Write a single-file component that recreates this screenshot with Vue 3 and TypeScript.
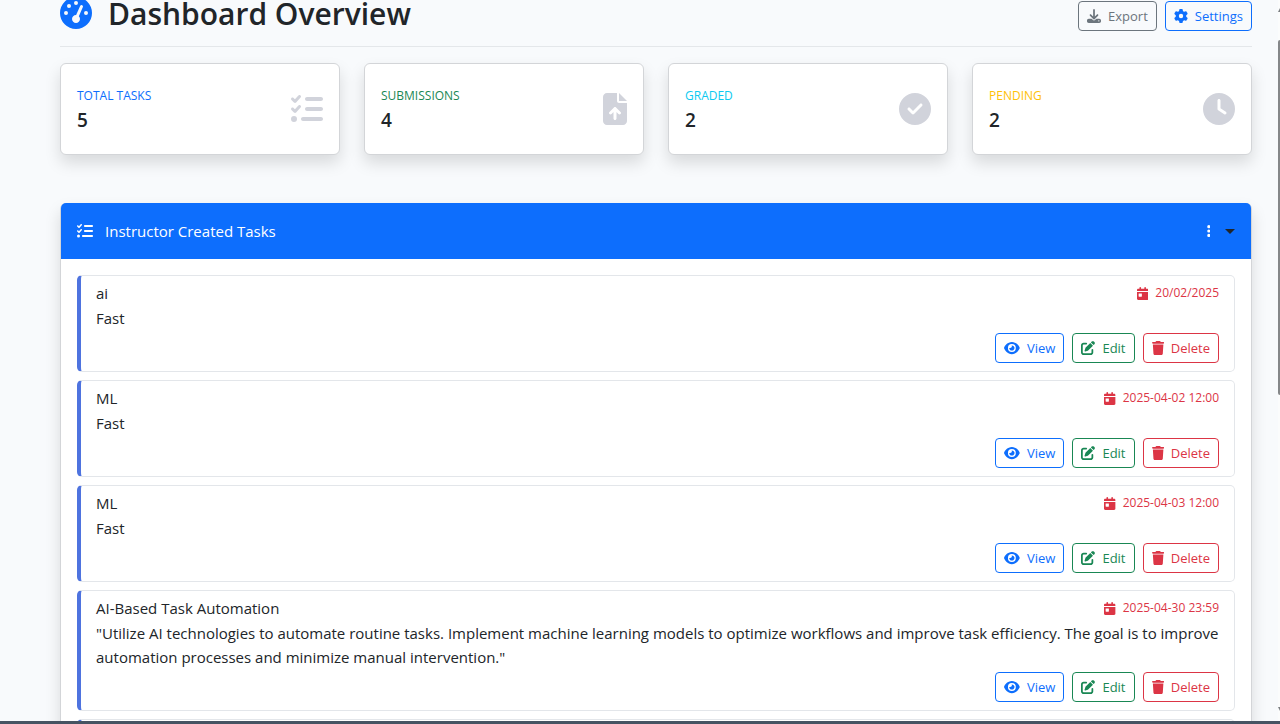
<script setup lang="ts">
interface Icon {
  width: number
  path: string
}

interface Stat {
  label: string
  value: number
  tone: string
  icon: string
}

interface Task {
  title: string
  description: string
  due: string
}

const icons: Record<string, Icon> = {
  gauge: {
    width: 512,
    path: 'M0 256a256 256 0 1 1 512 0A256 256 0 1 1 0 256zM288 96a32 32 0 1 0 -64 0 32 32 0 1 0 64 0zM256 416c35.3 0 64-28.7 64-64c0-17.4-6.9-33.1-18.1-44.6L366 161.7c5.3-12.1-.2-26.3-12.3-31.6s-26.3 .2-31.6 12.3L257.9 288c-.6 0-1.3 0-1.9 0c-35.3 0-64 28.7-64 64s28.7 64 64 64zM176 144a32 32 0 1 0 -64 0 32 32 0 1 0 64 0zM96 288a32 32 0 1 0 0-64 32 32 0 1 0 0 64zm352-32a32 32 0 1 0 -64 0 32 32 0 1 0 64 0z',
  },
  list: {
    width: 512,
    path: 'M152.1 38.2c9.9 8.9 10.7 24 1.8 33.9l-72 80c-4.4 4.9-10.6 7.8-17.2 7.9s-12.9-2.4-17.6-7L7 113C-2.3 103.6-2.3 88.4 7 79s24.6-9.4 33.9 0l22.1 22.1 55.1-61.2c8.9-9.9 24-10.7 33.9-1.8zm0 160c9.9 8.9 10.7 24 1.8 33.9l-72 80c-4.4 4.9-10.6 7.8-17.2 7.9s-12.9-2.4-17.6-7L7 273c-9.4-9.4-9.4-24.6 0-33.9s24.6-9.4 33.9 0l22.1 22.1 55.1-61.2c8.9-9.9 24-10.7 33.9-1.8zM224 96c0-17.7 14.3-32 32-32l224 0c17.7 0 32 14.3 32 32s-14.3 32-32 32l-224 0c-17.7 0-32-14.3-32-32zm0 160c0-17.7 14.3-32 32-32l224 0c17.7 0 32 14.3 32 32s-14.3 32-32 32l-224 0c-17.7 0-32-14.3-32-32zM160 416c0-17.7 14.3-32 32-32l288 0c17.7 0 32 14.3 32 32s-14.3 32-32 32l-288 0c-17.7 0-32-14.3-32-32zM48 368a48 48 0 1 1 0 96 48 48 0 1 1 0-96z',
  },
  file: {
    width: 384,
    path: 'M64 0C28.7 0 0 28.7 0 64L0 448c0 35.3 28.7 64 64 64l256 0c35.3 0 64-28.7 64-64l0-288-128 0c-17.7 0-32-14.3-32-32L224 0 64 0zM256 0l0 128 128 0L256 0zM216 408c0 13.3-10.7 24-24 24s-24-10.7-24-24l0-102.1-31 31c-9.4 9.4-24.6 9.4-33.9 0s-9.4-24.6 0-33.9l72-72c9.4-9.4 24.6-9.4 33.9 0l72 72c9.4 9.4 9.4 24.6 0 33.9s-24.6 9.4-33.9 0l-31-31L216 408z',
  },
  check: {
    width: 512,
    path: 'M256 512A256 256 0 1 0 256 0a256 256 0 1 0 0 512zM369 209L241 337c-9.4 9.4-24.6 9.4-33.9 0l-64-64c-9.4-9.4-9.4-24.6 0-33.9s24.6-9.4 33.9 0l47 47L335 175c9.4-9.4 24.6-9.4 33.9 0s9.4 24.6 0 33.9z',
  },
  clock: {
    width: 512,
    path: 'M256 0a256 256 0 1 1 0 512A256 256 0 1 1 256 0zM232 120l0 136c0 8 4 15.5 10.7 20l96 64c11 7.4 25.9 4.4 33.3-6.7s4.4-25.9-6.7-33.3L280 243.2 280 120c0-13.3-10.7-24-24-24s-24 10.7-24 24z',
  },
  download: {
    width: 512,
    path: 'M288 32c0-17.7-14.3-32-32-32s-32 14.3-32 32l0 242.7-73.4-73.4c-12.5-12.5-32.8-12.5-45.3 0s-12.5 32.8 0 45.3l128 128c12.5 12.5 32.8 12.5 45.3 0l128-128c12.5-12.5 12.5-32.8 0-45.3s-32.8-12.5-45.3 0L288 274.7 288 32zM64 352c-35.3 0-64 28.7-64 64l0 32c0 35.3 28.7 64 64 64l384 0c35.3 0 64-28.7 64-64l0-32c0-35.3-28.7-64-64-64l-101.5 0-45.3 45.3c-25 25-65.5 25-90.5 0L165.5 352 64 352zm368 56a24 24 0 1 1 0 48 24 24 0 1 1 0-48z',
  },
  gear: {
    width: 512,
    path: 'M495.9 166.6c3.2 8.7 .5 18.4-6.4 24.6l-43.3 39.4c1.1 8.3 1.7 16.8 1.7 25.4s-.6 17.1-1.7 25.4l43.3 39.4c6.9 6.2 9.6 15.9 6.4 24.6c-4.4 11.9-9.7 23.3-15.8 34.3l-4.7 8.1c-6.6 11-14 21.4-22.1 31.2c-5.9 7.2-15.7 9.6-24.5 6.8l-55.7-17.7c-13.4 10.3-28.2 18.9-44 25.4l-12.5 57.1c-2 9.1-9 16.3-18.2 17.8c-13.8 2.3-28 3.5-42.5 3.5s-28.7-1.2-42.5-3.5c-9.2-1.5-16.2-8.7-18.2-17.8l-12.5-57.1c-15.8-6.5-30.6-15.1-44-25.4L83.1 425.9c-8.8 2.8-18.6 .3-24.5-6.8c-8.1-9.8-15.5-20.2-22.1-31.2l-4.7-8.1c-6.1-11-11.4-22.4-15.8-34.3c-3.2-8.7-.5-18.4 6.4-24.6l43.3-39.4C64.6 273.1 64 264.6 64 256s.6-17.1 1.7-25.4L22.4 191.2c-6.9-6.2-9.6-15.9-6.4-24.6c4.4-11.9 9.7-23.3 15.8-34.3l4.7-8.1c6.6-11 14-21.4 22.1-31.2c5.9-7.2 15.7-9.6 24.5-6.8l55.7 17.7c13.4-10.3 28.2-18.9 44-25.4l12.5-57.1c2-9.1 9-16.3 18.2-17.8C227.3 1.2 241.5 0 256 0s28.7 1.2 42.5 3.5c9.2 1.5 16.2 8.7 18.2 17.8l12.5 57.1c15.8 6.5 30.6 15.1 44 25.4l55.7-17.7c8.8-2.8 18.6-.3 24.5 6.8c8.1 9.8 15.5 20.2 22.1 31.2l4.7 8.1c6.1 11 11.4 22.4 15.8 34.3zM256 336a80 80 0 1 0 0-160 80 80 0 1 0 0 160z',
  },
  dots: {
    width: 128,
    path: 'M64 360a56 56 0 1 0 0 112 56 56 0 1 0 0-112zm0-160a56 56 0 1 0 0 112 56 56 0 1 0 0-112zM120 96A56 56 0 1 0 8 96a56 56 0 1 0 112 0z',
  },
  calendar: {
    width: 448,
    path: 'M128 0c17.7 0 32 14.3 32 32l0 32 128 0 0-32c0-17.7 14.3-32 32-32s32 14.3 32 32l0 32 48 0c26.5 0 48 21.5 48 48l0 48L0 160l0-48C0 85.5 21.5 64 48 64l48 0 0-32c0-17.7 14.3-32 32-32zM0 192l448 0 0 272c0 26.5-21.5 48-48 48L48 512c-26.5 0-48-21.5-48-48L0 192zm80 64c-8.8 0-16 7.2-16 16l0 96c0 8.8 7.2 16 16 16l96 0c8.8 0 16-7.2 16-16l0-96c0-8.8-7.2-16-16-16l-96 0z',
  },
  eye: {
    width: 576,
    path: 'M288 32c-80.8 0-145.5 36.8-192.6 80.6C48.6 156 17.3 208 2.5 243.7c-3.3 7.9-3.3 16.7 0 24.6C17.3 304 48.6 356 95.4 399.4C142.5 443.2 207.2 480 288 480s145.5-36.8 192.6-80.6c46.8-43.5 78.1-95.4 93-131.1c3.3-7.9 3.3-16.7 0-24.6c-14.9-35.7-46.2-87.7-93-131.1C433.5 68.8 368.8 32 288 32zM144 256a144 144 0 1 1 288 0 144 144 0 1 1 -288 0zm144-64c0 35.3-28.7 64-64 64c-7.1 0-13.9-1.2-20.3-3.3c-5.5-1.8-11.9 1.6-11.7 7.4c.3 6.9 1.3 13.8 3.2 20.7c13.7 51.2 66.4 81.6 117.6 67.9s81.6-66.4 67.9-117.6c-11.1-41.5-47.8-69.4-88.6-71.1c-5.8-.2-9.2 6.1-7.4 11.7c2.1 6.4 3.3 13.2 3.3 20.3z',
  },
  pen: {
    width: 512,
    path: 'M471.6 21.7c-21.9-21.9-57.3-21.9-79.2 0L362.3 51.7l97.9 97.9 30.1-30.1c21.9-21.9 21.9-57.3 0-79.2L471.6 21.7zm-299.2 220c-6.1 6.1-10.8 13.6-13.5 21.9l-29.6 88.8c-2.9 8.6-.6 18.1 5.8 24.6s15.9 8.7 24.6 5.8l88.8-29.6c8.2-2.7 15.7-7.4 21.9-13.5L437.7 172.3 339.7 74.3 172.4 241.7zM96 64C43 64 0 107 0 160L0 416c0 53 43 96 96 96l256 0c53 0 96-43 96-96l0-96c0-17.7-14.3-32-32-32s-32 14.3-32 32l0 96c0 17.7-14.3 32-32 32L96 448c-17.7 0-32-14.3-32-32l0-256c0-17.7 14.3-32 32-32l96 0c17.7 0 32-14.3 32-32s-14.3-32-32-32L96 64z',
  },
  trash: {
    width: 448,
    path: 'M135.2 17.7L128 32 32 32C14.3 32 0 46.3 0 64S14.3 96 32 96l384 0c17.7 0 32-14.3 32-32s-14.3-32-32-32l-96 0-7.2-14.3C307.4 6.8 296.3 0 284.2 0L163.8 0c-12.1 0-23.2 6.8-28.6 17.7zM416 128L32 128 53.2 467c1.6 25.3 22.6 45 47.9 45l245.8 0c25.3 0 46.3-19.7 47.9-45L416 128z',
  },
}

const viewBox = (name: string): string => `0 0 ${icons[name].width} 512`

const stats: Stat[] = [
  { label: 'TOTAL TASKS', value: 5, tone: 'primary', icon: 'list' },
  { label: 'SUBMISSIONS', value: 4, tone: 'success', icon: 'file' },
  { label: 'GRADED', value: 2, tone: 'info', icon: 'check' },
  { label: 'PENDING', value: 2, tone: 'warning', icon: 'clock' },
]

const tasks: Task[] = [
  { title: 'ai', description: 'Fast', due: '20/02/2025' },
  { title: 'ML', description: 'Fast', due: '2025-04-02 12:00' },
  { title: 'ML', description: 'Fast', due: '2025-04-03 12:00' },
  {
    title: 'AI-Based Task Automation',
    description:
      '"Utilize AI technologies to automate routine tasks. Implement machine learning models to optimize workflows and improve task efficiency. The goal is to improve automation processes and minimize manual intervention."',
    due: '2025-04-30 23:59',
  },
]

const actions = [
  { label: 'View', tone: 'primary', icon: 'eye' },
  { label: 'Edit', tone: 'success', icon: 'pen' },
  { label: 'Delete', tone: 'danger', icon: 'trash' },
]
</script>

<template>
  <div class="page">
    <main>
      <header class="top">
        <h1>
          <svg class="icon gauge" :viewBox="viewBox('gauge')" aria-hidden="true"><path :d="icons.gauge.path" /></svg>
          Dashboard Overview
        </h1>
        <div class="buttons">
          <button type="button" class="btn secondary">
            <svg class="icon" :viewBox="viewBox('download')" aria-hidden="true"><path :d="icons.download.path" /></svg>
            Export
          </button>
          <button type="button" class="btn primary">
            <svg class="icon" :viewBox="viewBox('gear')" aria-hidden="true"><path :d="icons.gear.path" /></svg>
            Settings
          </button>
        </div>
      </header>

      <section class="stats">
        <article v-for="stat in stats" :key="stat.label" class="stat">
          <div>
            <div class="label" :class="stat.tone">{{ stat.label }}</div>
            <div class="value">{{ stat.value }}</div>
          </div>
          <svg class="icon stat-icon" :viewBox="viewBox(stat.icon)" aria-hidden="true"><path :d="icons[stat.icon].path" /></svg>
        </article>
      </section>

      <section class="panel">
        <header class="panel-head">
          <h2>
            <svg class="icon" :viewBox="viewBox('list')" aria-hidden="true"><path :d="icons.list.path" /></svg>
            Instructor Created Tasks
          </h2>
          <button type="button" class="menu" aria-label="Task options">
            <svg class="icon" :viewBox="viewBox('dots')" aria-hidden="true"><path :d="icons.dots.path" /></svg>
            <span class="caret"></span>
          </button>
        </header>
        <div class="list">
          <article v-for="task in tasks" :key="task.due" class="task">
            <div class="task-head">
              <h3>{{ task.title }}</h3>
              <span class="due">
                <svg class="icon" :viewBox="viewBox('calendar')" aria-hidden="true"><path :d="icons.calendar.path" /></svg>
                {{ task.due }}
              </span>
            </div>
            <p>{{ task.description }}</p>
            <div class="buttons">
              <button v-for="action in actions" :key="action.label" type="button" class="btn" :class="action.tone">
                <svg class="icon" :viewBox="viewBox(action.icon)" aria-hidden="true"><path :d="icons[action.icon].path" /></svg>
                {{ action.label }}
              </button>
            </div>
          </article>
          <article class="task next"></article>
        </div>
      </section>
    </main>
    <div class="scrollbar" aria-hidden="true">
      <span class="arrow up"></span>
      <span class="thumb"></span>
      <span class="arrow down"></span>
    </div>
    <div class="edge" aria-hidden="true"></div>
  </div>
</template>

<style>
body {
  margin: 0;
  background: #f8fafc;
}
</style>

<style scoped>
.page {
  position: relative;
  height: 100vh;
  overflow: hidden;
  box-sizing: border-box;
  padding: 0 28px 0 60px;
  color: #212529;
  font-family: "Segoe UI", "Open Sans", "Noto Sans", sans-serif;
  font-size: 15px;
  line-height: 24px;
}
h1, h2, h3, p {
  margin: 0;
}
.icon {
  flex: none;
  height: 1em;
  fill: currentColor;
}
.top {
  display: flex;
  justify-content: space-between;
  align-items: flex-start;
  height: 46px;
  border-bottom: 1px solid #e4e7ea;
}
.top .buttons {
  padding-top: 1px;
}
h1 {
  display: flex;
  align-items: center;
  gap: 16px;
  height: 28px;
  font-size: 30px;
  font-weight: 600;
  line-height: 28px;
}
.gauge {
  height: 32px;
  margin-bottom: 3px;
  color: #0d6efd;
}
.buttons {
  display: flex;
  justify-content: flex-end;
  gap: 8px;
}
.btn {
  display: flex;
  align-items: center;
  gap: 7px;
  height: 30px;
  padding: 0 8px;
  border: 1px solid currentColor;
  border-radius: 4px;
  background: transparent;
  font-family: inherit;
  font-size: 13px;
  line-height: 20px;
}
.btn .icon {
  height: 14px;
}
.primary {
  color: #0d6efd;
}
.secondary {
  color: #6c757d;
}
.success {
  color: #198754;
}
.danger {
  color: #dc3545;
}
.info {
  color: #0dcaf0;
}
.warning {
  color: #ffc107;
}
.stats {
  display: grid;
  grid-template-columns: repeat(4, 1fr);
  gap: 24px;
  margin: 16px 0 48px;
}
.stat {
  display: flex;
  justify-content: space-between;
  align-items: center;
  padding: 22px 16px;
  border: 1px solid #d3d5d8;
  border-radius: 6px;
  background: #fff;
  box-shadow: 0 8px 16px rgba(0, 0, 0, 0.13);
}
.label {
  margin-bottom: 2px;
  font-size: 12px;
  line-height: 20px;
}
.value {
  font-size: 19px;
  font-weight: 600;
  line-height: 24px;
}
.stat-icon {
  height: 32px;
  color: #d1d3db;
}
.panel {
  border: 1px solid #d3d5d8;
  border-top: 0;
  border-radius: 6px;
  background: #fff;
  box-shadow: 0 8px 16px rgba(0, 0, 0, 0.13);
}
.panel-head {
  display: flex;
  justify-content: space-between;
  align-items: center;
  height: 56px;
  padding: 0 16px;
  border-radius: 5px 5px 0 0;
  background: #0d6efd;
  color: #fff;
}
h2 {
  display: flex;
  align-items: center;
  gap: 12px;
  font-size: 15px;
  font-weight: 400;
}
h2 .icon {
  height: 16px;
}
.menu {
  display: flex;
  align-items: center;
  gap: 15px;
  padding: 0;
  border: 0;
  background: transparent;
  color: #fff;
  font-size: 14px;
}
.caret {
  border: 5px solid transparent;
  border-top-color: #212529;
  border-bottom: 0;
}
.list {
  display: flex;
  flex-direction: column;
  gap: 8px;
  padding: 16px;
}
.task {
  padding: 8px 15px;
  border: 1px solid #e3e6ea;
  border-left: 4px solid #4e73df;
  border-radius: 5px;
}
.next {
  min-height: 80px;
}
.task-head {
  display: flex;
  justify-content: space-between;
  align-items: center;
  margin-bottom: 4px;
  line-height: 18px;
}
h3 {
  font-size: 15px;
  font-weight: 400;
}
.due {
  display: flex;
  align-items: center;
  gap: 7px;
  color: #dc3545;
  font-size: 12px;
}
.due .icon {
  height: 13px;
}
.task p {
  margin-bottom: 3px;
}
.scrollbar {
  position: absolute;
  top: 0;
  right: 0;
  bottom: 3px;
  display: flex;
  flex-direction: column;
  justify-content: space-between;
  width: 2px;
  padding: 8px 0 10px;
  box-sizing: border-box;
  background: #fbfcfc;
}
.arrow {
  width: 2px;
  height: 4px;
  background: #7c7f82;
}
.up {
  clip-path: polygon(100% 0, 100% 100%, 0 100%);
}
.down {
  clip-path: polygon(0 0, 100% 0, 100% 100%);
}
.thumb {
  height: 355px;
  margin: 28px 0 auto;
  border-radius: 2px 0 0 2px;
  background: #858789;
}
.edge {
  position: absolute;
  right: 0;
  bottom: 0;
  left: 0;
  height: 3px;
  background: #465362;
}
</style>
